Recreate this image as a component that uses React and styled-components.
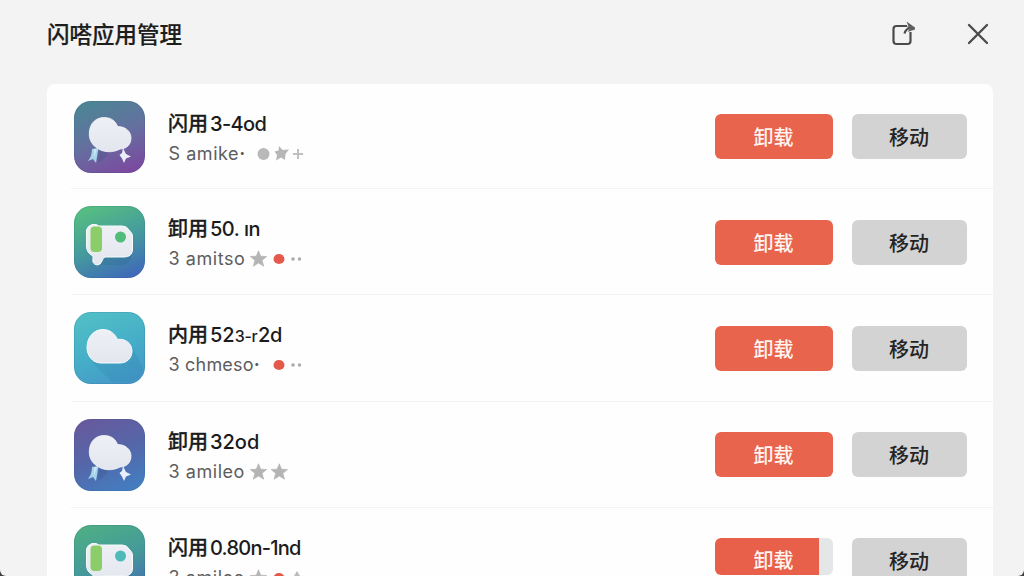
import React from "react";
import styled, { createGlobalStyle } from "styled-components";

const apps = [
  {
    icon: "balloon",
    from: "#4d8495",
    mid: "#64709f",
    to: "#7b4a9f",
    cjk: "闪用",
    parts: [{ text: "3-4od", spacing: -0.6 }],
    meta: "S amike",
    metaDot: true,
    marks: ["circle", "roughStar", "plus"],
    height: 105,
    buttonTop: 30,
  },
  {
    icon: "camera",
    from: "#55bd82",
    mid: "#459c9c",
    to: "#3f6bb8",
    dot: "#52bd7a",
    cjk: "卸用",
    parts: [{ text: "50. ın", spacing: -0.5 }],
    meta: "3 amitso",
    marks: ["star", "red", "dots"],
    height: 106,
    buttonTop: 31,
  },
  {
    icon: "cloud",
    from: "#50bec5",
    mid: "#46afc8",
    to: "#4598c8",
    cjk: "内用",
    parts: [
      { text: "52", spacing: 0 },
      { text: "3‑r", small: true, spacing: 0.3 },
      { text: "2d", spacing: -0.3 },
    ],
    meta: "3 chmeso",
    metaSpacing: 0.2,
    metaDot: true,
    marks: ["none", "red", "dots"],
    height: 107,
    buttonTop: 31,
  },
  {
    icon: "balloon",
    from: "#665a9e",
    mid: "#5467a9",
    to: "#437dc0",
    cjk: "卸用",
    parts: [{ text: "32od", spacing: 0 }],
    meta: "3 amileo",
    marks: ["star", "star"],
    height: 106,
    buttonTop: 30,
  },
  {
    icon: "camera",
    from: "#4dad86",
    mid: "#459a99",
    to: "#4470b0",
    dot: "#4fbbb9",
    cjk: "闪用",
    parts: [{ text: "0.80n-1nd", spacing: -0.75 }],
    meta: "3 amileo",
    marks: ["star", "red", "diamond"],
    height: 106,
    buttonTop: 30,
    partial: true,
  },
];

const STAR =
  "M0 -8.2 L2.2 -2.8 L8.2 -2.5 L3.6 1.3 L5.2 7.2 L0 4 L-5.2 7.2 L-3.6 1.3 L-8.2 -2.5 L-2.2 -2.8 Z";

function Mark({ type }) {
  switch (type) {
    case "star":
      return (
        <path
          d={STAR}
          fill="#b4b4b4"
          stroke="#b4b4b4"
          strokeWidth="0.7"
          strokeLinejoin="round"
        />
      );
    case "red":
      return <ellipse rx="5.5" ry="5.1" fill="#e5594a" />;
    case "circle":
      return <circle r="6" fill="#b9b9b9" />;
    case "roughStar":
      return (
        <path
          d="M-2 -8 L1.5 -4 L8 -4.5 L4.5 0 L4 6 L0 3.5 L-5 6.5 L-4 1 L-6.5 -2.5 L-2.5 -3.5 Z"
          fill="#b6b6b6"
        />
      );
    case "plus":
      return <path d="M-5 0 H5 M0 -5 V5" stroke="#c0c0c0" strokeWidth="2" />;
    case "dots":
      return (
        <g fill="#aaa">
          <circle cx="-3.5" r="1.8" />
          <circle cx="3" r="1.7" />
        </g>
      );
    case "diamond":
      return <path d="M0 -7 L3 -2 L6 1 L2 6 L-3 6 L-6 1 L-3 -2 Z" fill="#bbb" />;
    default:
      return null;
  }
}

const MARK_X = [
  { circle: 13.5, star: 8.5 },
  { roughStar: 31, star: 29.3, red: 29 },
  { plus: 48, dots: 46.5, diamond: 47 },
];

function Marks({ items }) {
  return (
    <MarksSvg width="60" height="20">
      {items.map((type, i) => (
        <g key={i} transform={`translate(${MARK_X[i][type] || 0} 10)`}>
          <Mark type={type} />
        </g>
      ))}
    </MarksSvg>
  );
}

function AppIcon({ app, id }) {
  const bg = `bg${id}`;
  const white = `white${id}`;
  return (
    <IconSvg width="71" height="72" viewBox="0 0 71 72">
      <defs>
        <linearGradient id={bg} x1="0.3" y1="0" x2="0.7" y2="1">
          <stop offset="0" stopColor={app.from} />
          <stop offset="0.5" stopColor={app.mid} />
          <stop offset="1" stopColor={app.to} />
        </linearGradient>
        <linearGradient id={white} x1="0" y1="0" x2="0" y2="1">
          <stop offset="0" stopColor="#eef0f6" />
          <stop offset="1" stopColor="#e4e6ef" />
        </linearGradient>
      </defs>
      <rect width="71" height="72" rx="17" fill={`url(#${bg})`} />
      <rect
        x="0.5"
        y="0.5"
        width="70"
        height="71"
        rx="16.5"
        fill="none"
        stroke="#205070"
        strokeOpacity="0.14"
      />
      {app.icon === "balloon" && (
        <>
          <path
            d="M25 50 L35 52 Q28 60 24 62 Z"
            fill="#304575"
            fillOpacity="0.2"
          />
          <path
            d="M18 48 L24.5 47 L22 62 L19 58 L14 60 Q18 55 18 48 Z"
            fill="#a5d5ea"
          />
          <path d="M20 48 L23 48 L20 57 Z" fill="#c8e6f1" />
          <path
            d="M49 47 L52 53 L57 55.5 L52 57.5 L50 62 L48 57.5 L45.5 54 L48 52 Z"
            fill="#e9eefa"
          />
          <path
            d="M30 16.5 C38 16.5 42 21 43.5 25.5 C51 25.5 57 30 57 37 C57 44 52 48 46 48 C39 52 29 51.5 23 47 C17 43 14.5 37 15.5 30 C16.5 22 22 16.5 30 16.5 Z"
            fill={`url(#${white})`}
            stroke="#f6f8fc"
            strokeWidth="0.8"
          />
        </>
      )}
      {app.icon === "cloud" && (
        <>
          <path
            d="M18 50 L38 70 H52 Q67 70 69 56 L58 34 L52 51 Z"
            fill="#257da5"
            fillOpacity="0.2"
          />
          <path
            d="M29 17.5 C36 17.5 41 22 43.5 27.5 C51 26 58 31.5 58 39 C58 46 53 51 46 51 H27 C18 51 13 43 13 35.5 C13 25 20 17.5 29 17.5 Z"
            fill={`url(#${white})`}
            stroke="#f7fbfd"
            strokeWidth="1"
          />
        </>
      )}
      {app.icon === "camera" && (
        <>
          <path
            d="M28 52 L25 59 H48 Q57 58 58 49 V30 L56 50 Z"
            fill="#235d85"
            fillOpacity="0.2"
          />
          <path
            d="M18 18.5 H22 L25 20 H48 Q53 20 55 24 L57.5 27 Q58.5 28 58.5 31 V44 Q58 51 50 51 H31 Q28.5 52 28 55 Q26.5 59 23 59 Q18 58 19 53 V50 Q12.5 47 12.5 40 V24 Q13.5 20 18 18.5 Z"
            fill={`url(#${white})`}
            stroke="#f6faf9"
            strokeWidth="1"
          />
          <rect x="16.5" y="20.5" width="11.5" height="25.5" rx="4" fill="#8bcd68" />
          <circle cx="46.5" cy="31" r="5.5" fill={app.dot} />
        </>
      )}
    </IconSvg>
  );
}

function AppRow({ app, id }) {
  return (
    <Row $height={app.height}>
      <AppIcon app={app} id={id} />
      <Info>
        <Name>
          <Cjk>{app.cjk}</Cjk>
          {app.parts.map((part, i) => (
            <Latin key={i} $small={part.small} $spacing={part.spacing}>
              {part.text}
            </Latin>
          ))}
        </Name>
        <Meta>
          <MetaText $spacing={app.metaSpacing}>
            {app.meta}
            {app.metaDot && <MetaDot>·</MetaDot>}
          </MetaText>
          <Marks items={app.marks} />
        </Meta>
      </Info>
      <Actions $top={app.buttonTop}>
        <UninstallButton $partial={app.partial}>卸载</UninstallButton>
        <MoveButton>移动</MoveButton>
      </Actions>
    </Row>
  );
}

function App() {
  return (
    <>
      <GlobalStyle />
      <Window>
        <Header>
          <Title>闪嗒应用管理</Title>
          <HeaderActions>
            <svg
              width="25"
              height="28"
              fill="none"
              stroke="#4b4b4b"
              strokeWidth="2.2"
              strokeLinejoin="round"
            >
              <path d="M16 6 H5.5 Q2.5 6 2.5 9 V21 Q2.5 24 5.5 24 H16.5 Q19.5 24 19.5 21 V12" />
              <path d="M13.5 13.5 Q14.5 9 19 8" />
              <path
                d="M15.5 1.5 L24 7.5 V9.5 L16.5 12 L18.5 9 L15.5 6.5 H17.5 Z"
                fill="#606060"
                stroke="none"
              />
            </svg>
            <svg
              width="22"
              height="22"
              stroke="#494949"
              strokeWidth="2.3"
              strokeLinecap="round"
            >
              <path d="M2 2 L20 20 M20 2 L2 20" />
            </svg>
          </HeaderActions>
        </Header>
        <List>
          {apps.map((app, i) => (
            <AppRow key={i} app={app} id={i} />
          ))}
        </List>
      </Window>
    </>
  );
}

export default App;

const GlobalStyle = createGlobalStyle`
  * {
    box-sizing: border-box;
  }
  body {
    margin: 0;
    background: #3a3f3d;
    overflow: hidden;
    font-family: Inter, "Noto Sans CJK SC", sans-serif;
  }
`;

const Window = styled.div`
  width: 1024px;
  height: 576px;
  display: flex;
  flex-direction: column;
  overflow: hidden;
  background: #f3f3f3;
  border-radius: 0 0 6px 6px;
`;

const Header = styled.header`
  height: 84px;
  flex-shrink: 0;
  display: flex;
  align-items: flex-start;
  justify-content: space-between;
  padding: 18px 35px 0 47px;
`;

const Title = styled.h1`
  margin: -1px 0 0;
  font-family: "Noto Sans CJK SC", sans-serif;
  font-size: 22.5px;
  font-weight: 500;
  line-height: 33px;
  color: #1d1d1d;
  -webkit-text-stroke: 0.2px #1d1d1d;
`;

const HeaderActions = styled.div`
  display: flex;
  align-items: center;
  gap: 51px;
  height: 32px;
`;

const List = styled.main`
  width: 946px;
  margin-left: 47px;
  flex: 1;
  min-height: 0;
  overflow: hidden;
  background: #fefefe;
  border-radius: 8px 8px 0 0;
`;

const Row = styled.section`
  height: ${({ $height }) => $height}px;
  margin-left: 24px;
  padding: 0 26px 0 3px;
  display: flex;
  align-items: flex-start;
  border-bottom: 1px solid #f3f3f3;
`;

const IconSvg = styled.svg`
  margin-top: 17px;
  flex-shrink: 0;
`;

const Info = styled.div`
  margin-left: 23px;
  padding-top: 25px;
  flex: 1;
`;

const Name = styled.div`
  height: 28px;
  display: flex;
  align-items: baseline;
  line-height: 28px;
  color: #1b1b1b;
  white-space: pre;
`;

const Cjk = styled.span`
  width: 42px;
  font-family: "Noto Sans CJK SC", sans-serif;
  font-size: 20px;
  font-weight: 500;
  -webkit-text-stroke: 0.3px #1b1b1b;
`;

const Latin = styled.span`
  font-size: ${({ $small }) => ($small ? 16 : 20)}px;
  font-weight: 500;
  letter-spacing: ${({ $spacing }) => $spacing || 0}px;
`;

const Meta = styled.div`
  display: flex;
  align-items: center;
  height: 33px;
`;

const MetaText = styled.span`
  width: 82px;
  padding-left: 0.5px;
  font-size: 18px;
  line-height: 33px;
  letter-spacing: ${({ $spacing }) => $spacing || 0.55}px;
  color: #5d5d5d;
  white-space: nowrap;
`;

const MetaDot = styled.span`
  font-weight: 700;
`;

const MarksSvg = styled.svg`
  flex-shrink: 0;
`;

const Actions = styled.div`
  display: flex;
  gap: 19px;
  padding-top: ${({ $top }) => $top}px;
`;

const Button = styled.button`
  height: 45px;
  padding: 0 1px 0 0;
  border: 0;
  border-radius: 6px;
  font-family: "Noto Sans CJK SC", sans-serif;
  font-size: 20px;
  font-weight: 500;
  line-height: 45px;
`;

const UninstallButton = styled(Button)`
  width: 118px;
  height: ${({ $partial }) => ($partial ? 37 : 45)}px;
  line-height: ${({ $partial }) => ($partial ? 43 : 45)}px;
  color: #fff4f0;
  background: ${({ $partial }) =>
    $partial
      ? "linear-gradient(to right, #e8604a 104px, #e4e6e7 104px)"
      : "#e8644d"};
`;

const MoveButton = styled(Button)`
  width: 115px;
  color: #242424;
  background: #d3d3d3;
`;
